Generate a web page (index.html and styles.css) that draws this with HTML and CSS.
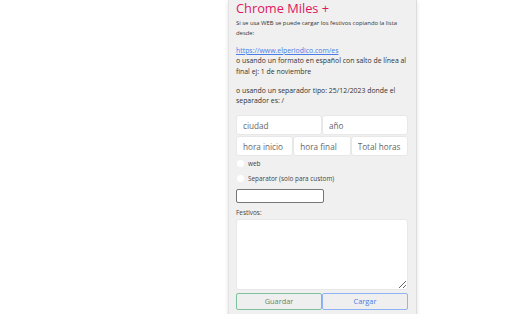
FILE: index.html
```html
<!DOCTYPE html>
<html lang="es">

<head>
    <meta charset="UTF-8">
    <meta name="viewport" content="width=device-width, initial-scale=1.0">
    <title>Chrome Miles +</title>
    <link rel="stylesheet" href="styles.css">
</head>

<body>
    <div class="popup">
        <h1 class="title">Chrome Miles +</h1>

        <p class="note">Si se usa WEB se puede cargar los festivos copiando la lista desde:</p>

        <p class="info">
            <a href="#">https://www.elperiodico.com/es</a><br>
            o usando un formato en español con salto de línea al final ej: 1 de noviembre
        </p>

        <p class="info">o usando un separador tipo: 25/12/2023 donde el separador es: /</p>

        <div class="fields">
            <div class="row">
                <input type="text" placeholder="ciudad">
                <input type="text" placeholder="año">
            </div>
            <div class="row">
                <input type="text" placeholder="hora inicio">
                <input type="text" placeholder="hora final">
                <input type="text" placeholder="Total horas">
            </div>
        </div>

        <label class="radio"><input type="radio" name="mode"> web</label>
        <label class="radio"><input type="radio" name="mode"> Separator (solo para custom)</label>

        <input type="text" class="separator">

        <label class="label">Festivos:</label>
        <textarea class="festivos"></textarea>

        <div class="buttons">
            <button class="save">Guardar</button>
            <button class="load">Cargar</button>
        </div>
    </div>
</body>

</html>
```

FILE: styles.css
```css
body {
    margin: 0;
    background: #fff;
    font-family: "Open Sans", "Noto Sans", sans-serif;
}

.popup {
    width: 172px;
    height: 314px;
    margin-left: 228px;
    padding: 0 8px 0 7px;
    background: #f0f0f0;
    border-left: 1px solid #e2e2e2;
    border-right: 1px solid #dcdcdc;
    box-shadow: 0 2px 4px rgba(0, 0, 0, 0.12);
    color: #333;
}

.title {
    margin: 0;
    font-size: 12.8px;
    font-weight: normal;
    line-height: 17px;
    color: #e0155f;
}

.note {
    margin: 1px 0 8px;
    font-size: 5.9px;
    line-height: 10px;
}

.info {
    margin: 0 0 9px;
    font-size: 6.9px;
    line-height: 10.3px;
}

.info a {
    color: #4a7de8;
}

.fields {
    margin-top: 1px;
    display: flex;
    flex-direction: column;
    gap: 1px;
}

.row {
    display: flex;
}

.row input {
    flex: 1;
    min-width: 0;
    height: 20px;
    box-sizing: border-box;
    padding: 0 3px 0 6px;
    border: 1px solid #e8e8e8;
    border-radius: 3px;
    background: #fff;
    font-family: inherit;
    font-size: 8.2px;
}

.row input::placeholder {
    color: #666;
}

.radio {
    display: flex;
    align-items: center;
    height: 14.5px;
    font-size: 6.4px;
    color: #444;
}

.radio input {
    width: 7px;
    height: 7px;
    margin: 0 4px 0 1px;
    appearance: none;
    border-radius: 50%;
    background: #fff;
}

.separator {
    display: block;
    width: 88px;
    height: 13.5px;
    box-sizing: border-box;
    margin-top: 4px;
    border: 1px solid #767676;
    border-radius: 2px;
    background: #fff;
}

.label {
    display: block;
    margin-top: 5px;
    font-size: 6.4px;
    line-height: 9px;
    color: #444;
}

.festivos {
    display: block;
    width: 172px;
    height: 71px;
    box-sizing: border-box;
    margin-top: 2px;
    border: 1px solid #e8e8e8;
    border-radius: 3px;
    background: #fff;
}

.buttons {
    display: flex;
    margin-top: 3px;
}

.buttons button {
    flex: 1;
    height: 17px;
    background: #efefef;
    border-radius: 2px;
    font-family: inherit;
    font-size: 7.4px;
}

.save {
    border: 1px solid #7cc29c;
    color: #5a8a6e;
}

.load {
    border: 1px solid #8fb4f5;
    color: #4a7de8;
}
```
